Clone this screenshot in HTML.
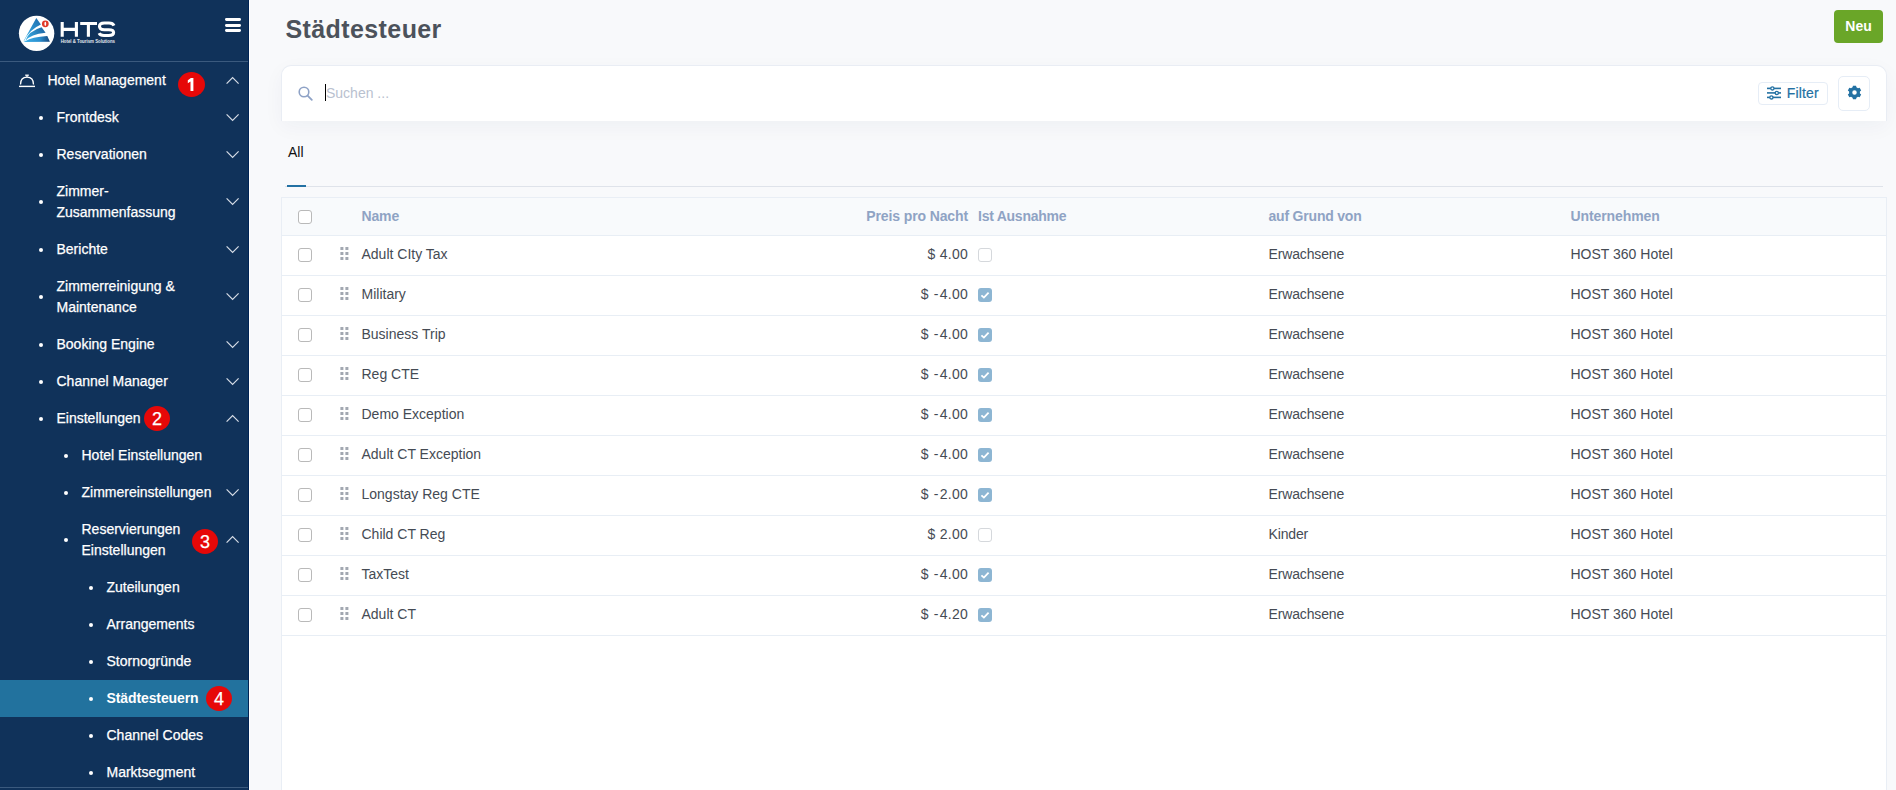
<!DOCTYPE html>
<html><head><meta charset="utf-8">
<style>
*{box-sizing:border-box;margin:0;padding:0}
html,body{width:1896px;height:790px;overflow:hidden;background:#f8f9fb;font-family:"Liberation Sans",sans-serif}
.abs{position:absolute}
#sb{position:absolute;left:0;top:0;width:249px;height:790px;background:#10325a;border-right:1px solid #002455;overflow:hidden}
.sep{position:absolute;left:0;width:248px;height:1px;background:#3b5a7e}
.wline{position:absolute;left:249px;top:0;width:1px;height:790px;background:#fff}
.tx{position:absolute;white-space:nowrap;color:#fff;font-size:14px;line-height:21px;-webkit-text-stroke:0.25px #fff}
.dot{position:absolute;width:4px;height:4px;border-radius:50%;background:#fff}
.badge{position:absolute;border-radius:50%;background:#e60808;color:#fff;font-size:18px;text-align:center;-webkit-text-stroke:0.25px #fff}
.chev{position:absolute;left:225px;width:15px;height:9px}
.active{position:absolute;left:0;top:680px;width:248px;height:37px;background:#22729e}
.mt{position:absolute;white-space:nowrap;font-size:14px;line-height:21px}
.hd{color:#8fa3c4;font-weight:bold;letter-spacing:-0.15px}
.cell{color:#454b54}
.cb{position:absolute;width:14px;height:14px;border:1px solid #b9b9b9;border-radius:3px;background:#fff}
.cbc{position:absolute;width:14px;height:14px;border-radius:3px;background:#8db6d3}
.rowline{position:absolute;left:282px;width:1604px;height:1px;background:#e8eef5}
.drag{position:absolute;width:9px;height:13px}
</style></head><body>

<div id="sb">
<svg class="abs" style="left:0;top:0" width="130" height="60" viewBox="0 0 130 60">
<defs><linearGradient id="lg" x1="0" y1="0" x2="1" y2="0">
<stop offset="0" stop-color="#3aaee6"/><stop offset="0.55" stop-color="#2a8ccc"/><stop offset="1" stop-color="#1a5a94"/></linearGradient></defs>
<circle cx="36.6" cy="33.35" r="17.7" fill="#fff"/>
<defs>
<linearGradient id="g1" gradientUnits="userSpaceOnUse" x1="24" y1="38" x2="42" y2="22"><stop offset="0" stop-color="#3ab2ea"/><stop offset="1" stop-color="#2170b0"/></linearGradient>
<linearGradient id="g2" gradientUnits="userSpaceOnUse" x1="25" y1="40" x2="46" y2="30"><stop offset="0" stop-color="#3ab2ea"/><stop offset="1" stop-color="#1d64a2"/></linearGradient>
<linearGradient id="g3" gradientUnits="userSpaceOnUse" x1="24" y1="40" x2="50" y2="40"><stop offset="0" stop-color="#3cb0e8"/><stop offset="0.6" stop-color="#2b8fcf"/><stop offset="1" stop-color="#16467c"/></linearGradient>
</defs>
<path d="M36.3,18.1 L40.9,24.4 Q29.3,29.5 24.4,40.6 L23.6,40.9 Z" fill="url(#g1)"/>
<path d="M41.6,27.3 L45.6,32.8 Q30.7,34.2 25.2,40.9 Q28.7,31 41.6,27.3 Z" fill="url(#g2)"/>
<path d="M47.3,36 L49.9,41.8 L23.2,42 L25.2,41.3 Q31.8,37 47.3,36 Z" fill="url(#g3)"/>
<circle cx="45.3" cy="23.8" r="3.4" fill="#e03a2a"/>
<ellipse cx="45.3" cy="23.8" rx="0.9" ry="2.1" fill="#fff"/>
<g fill="none" stroke="#fff" stroke-width="3.1">
<path d="M62.2,21.9 L62.2,36.8 M76.4,21.9 L76.4,36.8 M62.2,29.35 L76.4,29.35"/>
<path d="M80.2,23.45 L97,23.45 M88.4,23.45 L88.4,36.8"/>
<path d="M114,25.6 Q112.8,23.05 109,23.05 L104.3,23.05 Q99.5,23.05 99.5,26.3 Q99.5,29.7 104.3,29.7 L108.7,29.7 Q113.6,29.7 113.6,32.6 Q113.6,35.55 108.7,35.55 L104,35.55 Q100.2,35.55 99.1,33.2"/>
</g>
<text x="60.7" y="42.6" font-family="Liberation Sans" font-weight="bold" font-size="4.6" fill="#e4e9f0" textLength="54.3" lengthAdjust="spacingAndGlyphs">Hotel &amp; Tourism Solutions</text>
</svg>
<div class="abs" style="left:224.8px;top:18.2px;width:16.4px;height:2.8px;border-radius:1.4px;background:#fff"></div>
<div class="abs" style="left:224.8px;top:24px;width:16.4px;height:2.8px;border-radius:1.4px;background:#fff"></div>
<div class="abs" style="left:224.8px;top:29.4px;width:16.4px;height:2.8px;border-radius:1.4px;background:#fff"></div>
<div class="sep" style="top:61px"></div>
<div class="sep" style="top:787px"></div>
<div class="active"></div>
<div class="tx" style="left:47.5px;top:69.65px;">Hotel Management</div>
<svg class="chev" style="top:75.65px" viewBox="0 0 15 9"><path d="M1.6,7.7 L7.6,1.7 L13.6,7.7" fill="none" stroke="#d5dce6" stroke-width="1.2"/></svg>
<div class="tx" style="left:56.5px;top:106.65px;">Frontdesk</div>
<div class="dot" style="left:39px;top:115.55px"></div>
<svg class="chev" style="top:112.65px" viewBox="0 0 15 9"><path d="M1.6,1.3 L7.6,7.3 L13.6,1.3" fill="none" stroke="#d5dce6" stroke-width="1.2"/></svg>
<div class="tx" style="left:56.5px;top:143.65px;">Reservationen</div>
<div class="dot" style="left:39px;top:152.55px"></div>
<svg class="chev" style="top:149.65px" viewBox="0 0 15 9"><path d="M1.6,1.3 L7.6,7.3 L13.6,1.3" fill="none" stroke="#d5dce6" stroke-width="1.2"/></svg>
<div class="tx" style="left:56.5px;top:180.65px;">Zimmer-</div>
<div class="tx" style="left:56.5px;top:201.65px;">Zusammenfassung</div>
<div class="dot" style="left:39px;top:200.05px"></div>
<svg class="chev" style="top:197.15px" viewBox="0 0 15 9"><path d="M1.6,1.3 L7.6,7.3 L13.6,1.3" fill="none" stroke="#d5dce6" stroke-width="1.2"/></svg>
<div class="tx" style="left:56.5px;top:238.65px;">Berichte</div>
<div class="dot" style="left:39px;top:247.55px"></div>
<svg class="chev" style="top:244.65px" viewBox="0 0 15 9"><path d="M1.6,1.3 L7.6,7.3 L13.6,1.3" fill="none" stroke="#d5dce6" stroke-width="1.2"/></svg>
<div class="tx" style="left:56.5px;top:275.65px;">Zimmerreinigung &amp;</div>
<div class="tx" style="left:56.5px;top:296.65px;">Maintenance</div>
<div class="dot" style="left:39px;top:295.05px"></div>
<svg class="chev" style="top:292.15px" viewBox="0 0 15 9"><path d="M1.6,1.3 L7.6,7.3 L13.6,1.3" fill="none" stroke="#d5dce6" stroke-width="1.2"/></svg>
<div class="tx" style="left:56.5px;top:333.65px;">Booking Engine</div>
<div class="dot" style="left:39px;top:342.55px"></div>
<svg class="chev" style="top:339.65px" viewBox="0 0 15 9"><path d="M1.6,1.3 L7.6,7.3 L13.6,1.3" fill="none" stroke="#d5dce6" stroke-width="1.2"/></svg>
<div class="tx" style="left:56.5px;top:370.65px;">Channel Manager</div>
<div class="dot" style="left:39px;top:379.55px"></div>
<svg class="chev" style="top:376.65px" viewBox="0 0 15 9"><path d="M1.6,1.3 L7.6,7.3 L13.6,1.3" fill="none" stroke="#d5dce6" stroke-width="1.2"/></svg>
<div class="tx" style="left:56.5px;top:407.65px;">Einstellungen</div>
<div class="dot" style="left:39px;top:416.55px"></div>
<svg class="chev" style="top:413.65px" viewBox="0 0 15 9"><path d="M1.6,7.7 L7.6,1.7 L13.6,7.7" fill="none" stroke="#d5dce6" stroke-width="1.2"/></svg>
<div class="tx" style="left:81.5px;top:444.65px;">Hotel Einstellungen</div>
<div class="dot" style="left:64px;top:453.55px"></div>
<div class="tx" style="left:81.5px;top:481.65px;">Zimmereinstellungen</div>
<div class="dot" style="left:64px;top:490.55px"></div>
<svg class="chev" style="top:487.65px" viewBox="0 0 15 9"><path d="M1.6,1.3 L7.6,7.3 L13.6,1.3" fill="none" stroke="#d5dce6" stroke-width="1.2"/></svg>
<div class="tx" style="left:81.5px;top:518.65px;">Reservierungen</div>
<div class="tx" style="left:81.5px;top:539.65px;">Einstellungen</div>
<div class="dot" style="left:64px;top:538.05px"></div>
<svg class="chev" style="top:535.15px" viewBox="0 0 15 9"><path d="M1.6,7.7 L7.6,1.7 L13.6,7.7" fill="none" stroke="#d5dce6" stroke-width="1.2"/></svg>
<div class="tx" style="left:106.5px;top:576.65px;">Zuteilungen</div>
<div class="dot" style="left:89px;top:585.55px"></div>
<div class="tx" style="left:106.5px;top:613.65px;">Arrangements</div>
<div class="dot" style="left:89px;top:622.55px"></div>
<div class="tx" style="left:106.5px;top:650.65px;">Stornogründe</div>
<div class="dot" style="left:89px;top:659.55px"></div>
<div class="tx" style="left:106.5px;top:687.65px;font-weight:bold;-webkit-text-stroke:0;letter-spacing:-0.1px;">Städtesteuern</div>
<div class="dot" style="left:89px;top:696.55px"></div>
<div class="tx" style="left:106.5px;top:724.65px;">Channel Codes</div>
<div class="dot" style="left:89px;top:733.55px"></div>
<div class="tx" style="left:106.5px;top:761.65px;">Marktsegment</div>
<div class="dot" style="left:89px;top:770.55px"></div>
<svg class="abs" style="left:18px;top:73px" width="18" height="15" viewBox="0 0 18 15">
<path d="M2.5,11.5 Q2.5,4.2 9,4.2 Q15.5,4.2 15.5,11.5" fill="none" stroke="#fff" stroke-width="1.3"/>
<path d="M7.2,2.2 L10.8,2.2" stroke="#fff" stroke-width="1.3"/>
<path d="M9,2.2 L9,4.2" stroke="#fff" stroke-width="1.2"/>
<path d="M1,13.4 L17,13.4" stroke="#fff" stroke-width="1.4"/>
</svg>
<div class="badge" style="left:177.5px;top:71.8px;width:27px;height:25px"></div>
<svg class="abs" style="left:0;top:0" width="249" height="100"><path d="M193.4,77.9 L193.4,91.1 L190.5,91.1 L190.5,81.6 L187.8,83.2 L187.8,80.3 L190.9,77.9 Z" fill="#fff"/></svg>
<div class="badge" style="left:144.0px;top:405.5px;width:26px;height:25px;line-height:25px"><div style="position:absolute;left:0;top:1px;width:100%">2</div></div>
<div class="badge" style="left:192.0px;top:528.5px;width:26px;height:25px;line-height:25px"><div style="position:absolute;left:0;top:1px;width:100%">3</div></div>
<div class="badge" style="left:206.0px;top:686.0px;width:26px;height:25px;line-height:25px"><div style="position:absolute;left:0;top:1px;width:100%">4</div></div>
</div>
<div class="wline"></div>
<div class="mt" style="left:285.5px;top:13px;font-size:25px;line-height:33px;font-weight:bold;color:#4c525b;letter-spacing:0.4px">Städtesteuer</div>
<div class="abs" style="left:1834px;top:10px;width:49px;height:33px;border-radius:4px;background:#6aa628;color:#fff;font-weight:bold;font-size:14px;line-height:33px;text-align:center">Neu</div>
<div class="abs" style="left:281px;top:65px;width:1606px;height:56px;background:#fff;border:1px solid #e9edf4;border-bottom:none;border-radius:10px 10px 0 0;box-shadow:0 6px 20px rgba(30,50,90,0.045)"></div>
<svg class="abs" style="left:298px;top:85.5px" width="15" height="15" viewBox="0 0 15 15">
<circle cx="6" cy="6" r="4.8" fill="none" stroke="#8ea2c6" stroke-width="1.6"/>
<path d="M9.6,9.6 L13.8,13.8" stroke="#8ea2c6" stroke-width="1.8" stroke-linecap="round"/></svg>
<div class="abs" style="left:325px;top:84px;width:1.2px;height:17px;background:#000"></div>
<div class="mt" style="left:326px;top:82.65px;color:#b9c1cf">Suchen ...</div>
<div class="abs" style="left:1758px;top:82px;width:70px;height:23px;border:1px solid #e6edf6;border-radius:4px;background:#fff"></div>
<svg class="abs" style="left:1766px;top:85.5px" width="16" height="14" viewBox="0 0 16 14">
<g stroke="#2371a3" stroke-width="1.6" fill="none">
<path d="M1,2.4 L15,2.4"/><path d="M1,6.9 L15,6.9"/><path d="M1,11.4 L15,11.4"/>
</g>
<g stroke="#2371a3" stroke-width="1.3" fill="#fff">
<circle cx="6.4" cy="2.4" r="1.6"/><circle cx="10.8" cy="6.9" r="1.6"/><circle cx="5.4" cy="11.4" r="1.6"/>
</g></svg>
<div class="mt" style="left:1786.8px;top:82.65px;color:#2371a3;-webkit-text-stroke:0.2px #2371a3;letter-spacing:0.15px">Filter</div>
<div class="abs" style="left:1838px;top:76px;width:32px;height:35px;border:1px solid #e6edf6;border-radius:5px;background:#fff"></div>
<svg class="abs" style="left:1846.7px;top:85.3px" width="15" height="15" viewBox="0 0 15 15">
<path d="M5.56,2.35 L5.97,0.67 L9.03,0.67 L9.44,2.35 L10.18,2.82 L10.99,3.25 L12.65,2.76 L14.18,5.41 L12.93,6.60 L12.89,7.48 L12.93,8.40 L14.18,9.59 L12.65,12.24 L10.99,11.75 L10.21,12.16 L9.44,12.65 L9.03,14.33 L5.97,14.33 L5.56,12.65 L4.82,12.18 L4.01,11.75 L2.35,12.24 L0.82,9.59 L2.07,8.40 L2.11,7.52 L2.07,6.60 L0.82,5.41 L2.35,2.76 L4.01,3.25 L4.79,2.84 Z M9.75,7.5 A2.25,2.25 0 1,0 5.25,7.5 A2.25,2.25 0 1,0 9.75,7.5 Z" fill="#2371a3" fill-rule="evenodd"/></svg>
<div class="mt" style="left:288px;top:141.65px;color:#111">All</div>
<div class="abs" style="left:285px;top:185.5px;width:1598px;height:1px;background:#dfe3ea"></div>
<div class="abs" style="left:287px;top:184.5px;width:19px;height:2px;background:#2371a3"></div>
<div class="abs" style="left:281px;top:197px;width:1606px;height:600px;background:#fff;border:1px solid #e9eef5"></div>
<div class="abs" style="left:282px;top:198px;width:1604px;height:37px;background:#f8fafc"></div>
<div class="rowline" style="top:235px"></div>
<div class="cb" style="left:298px;top:210px;background:#fff"></div>
<div class="mt hd" style="left:361.5px;top:205.65px">Name</div>
<div class="mt hd" style="left:866px;top:205.65px;width:102px;text-align:right;letter-spacing:-0.12px">Preis pro Nacht</div>
<div class="mt hd" style="left:978px;top:205.65px;letter-spacing:-0.25px">Ist Ausnahme</div>
<div class="mt hd" style="left:1268.5px;top:205.65px;letter-spacing:-0.2px">auf Grund von</div>
<div class="mt hd" style="left:1570.5px;top:205.65px;letter-spacing:-0.1px">Unternehmen</div>
<div class="cb" style="left:298px;top:248px"></div>
<svg class="drag" style="left:340px;top:247px" viewBox="0 0 9 13"><g fill="#a2a8b1"><rect x="0.4" y="0" width="3" height="3"/><rect x="5.4" y="0" width="3" height="3"/><rect x="0.4" y="5" width="3" height="3"/><rect x="5.4" y="5" width="3" height="3"/><rect x="0.4" y="10" width="3" height="3"/><rect x="5.4" y="10" width="3" height="3"/></g></svg>
<div class="mt cell" style="left:361.5px;top:244.45px">Adult CIty Tax</div>
<div class="mt cell" style="left:848px;top:244.45px;width:120px;text-align:right;letter-spacing:0.25px">$ 4.00</div>
<div class="cb" style="left:978px;top:248px;border-color:#d5d8dc"></div>
<div class="mt cell" style="left:1268.5px;top:244.45px;letter-spacing:-0.15px">Erwachsene</div>
<div class="mt cell" style="left:1570.5px;top:244.45px">HOST 360 Hotel</div>
<div class="rowline" style="top:275px"></div>
<div class="cb" style="left:298px;top:288px"></div>
<svg class="drag" style="left:340px;top:287px" viewBox="0 0 9 13"><g fill="#a2a8b1"><rect x="0.4" y="0" width="3" height="3"/><rect x="5.4" y="0" width="3" height="3"/><rect x="0.4" y="5" width="3" height="3"/><rect x="5.4" y="5" width="3" height="3"/><rect x="0.4" y="10" width="3" height="3"/><rect x="5.4" y="10" width="3" height="3"/></g></svg>
<div class="mt cell" style="left:361.5px;top:284.45px">Military</div>
<div class="mt cell" style="left:848px;top:284.45px;width:120px;text-align:right;letter-spacing:0.25px">$ <span style='margin:0 1px'>-</span>4.00</div>
<div class="cbc" style="left:978px;top:288px"><svg width="14" height="14" viewBox="0 0 14 14"><path d="M3.4,7.3 L5.9,9.6 L10.6,4.6" fill="none" stroke="#fff" stroke-width="1.8"/></svg></div>
<div class="mt cell" style="left:1268.5px;top:284.45px;letter-spacing:-0.15px">Erwachsene</div>
<div class="mt cell" style="left:1570.5px;top:284.45px">HOST 360 Hotel</div>
<div class="rowline" style="top:315px"></div>
<div class="cb" style="left:298px;top:328px"></div>
<svg class="drag" style="left:340px;top:327px" viewBox="0 0 9 13"><g fill="#a2a8b1"><rect x="0.4" y="0" width="3" height="3"/><rect x="5.4" y="0" width="3" height="3"/><rect x="0.4" y="5" width="3" height="3"/><rect x="5.4" y="5" width="3" height="3"/><rect x="0.4" y="10" width="3" height="3"/><rect x="5.4" y="10" width="3" height="3"/></g></svg>
<div class="mt cell" style="left:361.5px;top:324.45px">Business Trip</div>
<div class="mt cell" style="left:848px;top:324.45px;width:120px;text-align:right;letter-spacing:0.25px">$ <span style='margin:0 1px'>-</span>4.00</div>
<div class="cbc" style="left:978px;top:328px"><svg width="14" height="14" viewBox="0 0 14 14"><path d="M3.4,7.3 L5.9,9.6 L10.6,4.6" fill="none" stroke="#fff" stroke-width="1.8"/></svg></div>
<div class="mt cell" style="left:1268.5px;top:324.45px;letter-spacing:-0.15px">Erwachsene</div>
<div class="mt cell" style="left:1570.5px;top:324.45px">HOST 360 Hotel</div>
<div class="rowline" style="top:355px"></div>
<div class="cb" style="left:298px;top:368px"></div>
<svg class="drag" style="left:340px;top:367px" viewBox="0 0 9 13"><g fill="#a2a8b1"><rect x="0.4" y="0" width="3" height="3"/><rect x="5.4" y="0" width="3" height="3"/><rect x="0.4" y="5" width="3" height="3"/><rect x="5.4" y="5" width="3" height="3"/><rect x="0.4" y="10" width="3" height="3"/><rect x="5.4" y="10" width="3" height="3"/></g></svg>
<div class="mt cell" style="left:361.5px;top:364.45px">Reg CTE</div>
<div class="mt cell" style="left:848px;top:364.45px;width:120px;text-align:right;letter-spacing:0.25px">$ <span style='margin:0 1px'>-</span>4.00</div>
<div class="cbc" style="left:978px;top:368px"><svg width="14" height="14" viewBox="0 0 14 14"><path d="M3.4,7.3 L5.9,9.6 L10.6,4.6" fill="none" stroke="#fff" stroke-width="1.8"/></svg></div>
<div class="mt cell" style="left:1268.5px;top:364.45px;letter-spacing:-0.15px">Erwachsene</div>
<div class="mt cell" style="left:1570.5px;top:364.45px">HOST 360 Hotel</div>
<div class="rowline" style="top:395px"></div>
<div class="cb" style="left:298px;top:408px"></div>
<svg class="drag" style="left:340px;top:407px" viewBox="0 0 9 13"><g fill="#a2a8b1"><rect x="0.4" y="0" width="3" height="3"/><rect x="5.4" y="0" width="3" height="3"/><rect x="0.4" y="5" width="3" height="3"/><rect x="5.4" y="5" width="3" height="3"/><rect x="0.4" y="10" width="3" height="3"/><rect x="5.4" y="10" width="3" height="3"/></g></svg>
<div class="mt cell" style="left:361.5px;top:404.45px">Demo Exception</div>
<div class="mt cell" style="left:848px;top:404.45px;width:120px;text-align:right;letter-spacing:0.25px">$ <span style='margin:0 1px'>-</span>4.00</div>
<div class="cbc" style="left:978px;top:408px"><svg width="14" height="14" viewBox="0 0 14 14"><path d="M3.4,7.3 L5.9,9.6 L10.6,4.6" fill="none" stroke="#fff" stroke-width="1.8"/></svg></div>
<div class="mt cell" style="left:1268.5px;top:404.45px;letter-spacing:-0.15px">Erwachsene</div>
<div class="mt cell" style="left:1570.5px;top:404.45px">HOST 360 Hotel</div>
<div class="rowline" style="top:435px"></div>
<div class="cb" style="left:298px;top:448px"></div>
<svg class="drag" style="left:340px;top:447px" viewBox="0 0 9 13"><g fill="#a2a8b1"><rect x="0.4" y="0" width="3" height="3"/><rect x="5.4" y="0" width="3" height="3"/><rect x="0.4" y="5" width="3" height="3"/><rect x="5.4" y="5" width="3" height="3"/><rect x="0.4" y="10" width="3" height="3"/><rect x="5.4" y="10" width="3" height="3"/></g></svg>
<div class="mt cell" style="left:361.5px;top:444.45px">Adult CT Exception</div>
<div class="mt cell" style="left:848px;top:444.45px;width:120px;text-align:right;letter-spacing:0.25px">$ <span style='margin:0 1px'>-</span>4.00</div>
<div class="cbc" style="left:978px;top:448px"><svg width="14" height="14" viewBox="0 0 14 14"><path d="M3.4,7.3 L5.9,9.6 L10.6,4.6" fill="none" stroke="#fff" stroke-width="1.8"/></svg></div>
<div class="mt cell" style="left:1268.5px;top:444.45px;letter-spacing:-0.15px">Erwachsene</div>
<div class="mt cell" style="left:1570.5px;top:444.45px">HOST 360 Hotel</div>
<div class="rowline" style="top:475px"></div>
<div class="cb" style="left:298px;top:488px"></div>
<svg class="drag" style="left:340px;top:487px" viewBox="0 0 9 13"><g fill="#a2a8b1"><rect x="0.4" y="0" width="3" height="3"/><rect x="5.4" y="0" width="3" height="3"/><rect x="0.4" y="5" width="3" height="3"/><rect x="5.4" y="5" width="3" height="3"/><rect x="0.4" y="10" width="3" height="3"/><rect x="5.4" y="10" width="3" height="3"/></g></svg>
<div class="mt cell" style="left:361.5px;top:484.45px">Longstay Reg CTE</div>
<div class="mt cell" style="left:848px;top:484.45px;width:120px;text-align:right;letter-spacing:0.25px">$ <span style='margin:0 1px'>-</span>2.00</div>
<div class="cbc" style="left:978px;top:488px"><svg width="14" height="14" viewBox="0 0 14 14"><path d="M3.4,7.3 L5.9,9.6 L10.6,4.6" fill="none" stroke="#fff" stroke-width="1.8"/></svg></div>
<div class="mt cell" style="left:1268.5px;top:484.45px;letter-spacing:-0.15px">Erwachsene</div>
<div class="mt cell" style="left:1570.5px;top:484.45px">HOST 360 Hotel</div>
<div class="rowline" style="top:515px"></div>
<div class="cb" style="left:298px;top:528px"></div>
<svg class="drag" style="left:340px;top:527px" viewBox="0 0 9 13"><g fill="#a2a8b1"><rect x="0.4" y="0" width="3" height="3"/><rect x="5.4" y="0" width="3" height="3"/><rect x="0.4" y="5" width="3" height="3"/><rect x="5.4" y="5" width="3" height="3"/><rect x="0.4" y="10" width="3" height="3"/><rect x="5.4" y="10" width="3" height="3"/></g></svg>
<div class="mt cell" style="left:361.5px;top:524.45px">Child CT Reg</div>
<div class="mt cell" style="left:848px;top:524.45px;width:120px;text-align:right;letter-spacing:0.25px">$ 2.00</div>
<div class="cb" style="left:978px;top:528px;border-color:#d5d8dc"></div>
<div class="mt cell" style="left:1268.5px;top:524.45px;letter-spacing:-0.15px">Kinder</div>
<div class="mt cell" style="left:1570.5px;top:524.45px">HOST 360 Hotel</div>
<div class="rowline" style="top:555px"></div>
<div class="cb" style="left:298px;top:568px"></div>
<svg class="drag" style="left:340px;top:567px" viewBox="0 0 9 13"><g fill="#a2a8b1"><rect x="0.4" y="0" width="3" height="3"/><rect x="5.4" y="0" width="3" height="3"/><rect x="0.4" y="5" width="3" height="3"/><rect x="5.4" y="5" width="3" height="3"/><rect x="0.4" y="10" width="3" height="3"/><rect x="5.4" y="10" width="3" height="3"/></g></svg>
<div class="mt cell" style="left:361.5px;top:564.45px">TaxTest</div>
<div class="mt cell" style="left:848px;top:564.45px;width:120px;text-align:right;letter-spacing:0.25px">$ <span style='margin:0 1px'>-</span>4.00</div>
<div class="cbc" style="left:978px;top:568px"><svg width="14" height="14" viewBox="0 0 14 14"><path d="M3.4,7.3 L5.9,9.6 L10.6,4.6" fill="none" stroke="#fff" stroke-width="1.8"/></svg></div>
<div class="mt cell" style="left:1268.5px;top:564.45px;letter-spacing:-0.15px">Erwachsene</div>
<div class="mt cell" style="left:1570.5px;top:564.45px">HOST 360 Hotel</div>
<div class="rowline" style="top:595px"></div>
<div class="cb" style="left:298px;top:608px"></div>
<svg class="drag" style="left:340px;top:607px" viewBox="0 0 9 13"><g fill="#a2a8b1"><rect x="0.4" y="0" width="3" height="3"/><rect x="5.4" y="0" width="3" height="3"/><rect x="0.4" y="5" width="3" height="3"/><rect x="5.4" y="5" width="3" height="3"/><rect x="0.4" y="10" width="3" height="3"/><rect x="5.4" y="10" width="3" height="3"/></g></svg>
<div class="mt cell" style="left:361.5px;top:604.45px">Adult CT</div>
<div class="mt cell" style="left:848px;top:604.45px;width:120px;text-align:right;letter-spacing:0.25px">$ <span style='margin:0 1px'>-</span>4.20</div>
<div class="cbc" style="left:978px;top:608px"><svg width="14" height="14" viewBox="0 0 14 14"><path d="M3.4,7.3 L5.9,9.6 L10.6,4.6" fill="none" stroke="#fff" stroke-width="1.8"/></svg></div>
<div class="mt cell" style="left:1268.5px;top:604.45px;letter-spacing:-0.15px">Erwachsene</div>
<div class="mt cell" style="left:1570.5px;top:604.45px">HOST 360 Hotel</div>
<div class="rowline" style="top:635px"></div>
</body></html>
